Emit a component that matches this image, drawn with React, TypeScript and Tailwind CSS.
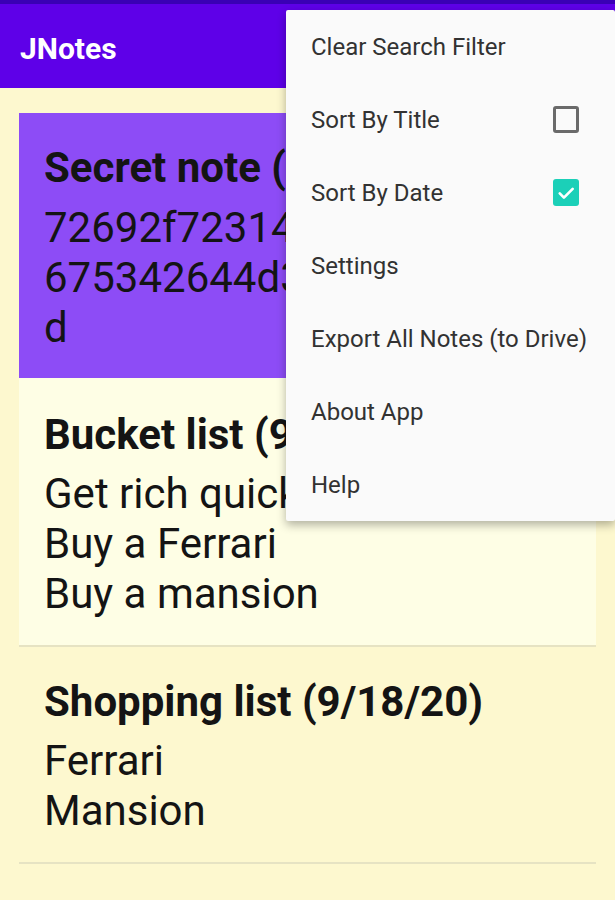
import React from "react";

const font = { fontFamily: "Roboto, 'Noto Sans', sans-serif" };

function Card({
  title,
  lines,
  className,
  pt,
  gap,
  pb,
}: {
  title: string;
  lines: string[];
  className: string;
  pt: string;
  gap: string;
  pb: string;
}) {
  return (
    <div className={`${className} ${pt} ${pb} px-[25px] overflow-hidden`}>
      <div className="text-[42px] leading-[50px] font-bold text-[#141414] whitespace-nowrap">{title}</div>
      <div className={gap}>
        {lines.map((l, i) => (
          <div key={i} className="text-[42px] leading-[50px] text-[#141414] whitespace-nowrap">
            {l}
          </div>
        ))}
      </div>
    </div>
  );
}

function MenuItem({ label, check }: { label: string; check?: "on" | "off" }) {
  return (
    <div className="h-[73px] flex items-center pl-[25px] pr-[36px] justify-between">
      <span className="text-[24px] text-[#323232] whitespace-nowrap">{label}</span>
      {check === "off" && (
        <span className="w-[26px] h-[27px] rounded-[3px] border-[3px] border-[#6a6a6a] box-border" />
      )}
      {check === "on" && (
        <span className="w-[26px] h-[27px] rounded-[3px] bg-[#1bd0b8] flex items-center justify-center">
          <svg width="20" height="20" viewBox="0 0 24 24" fill="none">
            <path d="M4.5 12.5l5 5L20 7" stroke="white" strokeWidth="3.2" strokeLinecap="round" strokeLinejoin="round" />
          </svg>
        </span>
      )}
    </div>
  );
}

export default function App() {
  return (
    <div className="w-[615px] h-[900px] relative overflow-hidden bg-[#fdf8cf]" style={font}>
      <div className="h-[4px] bg-[#3a00b5]" />
      <div className="h-[84px] bg-[#5e00e8] flex items-center px-[20px] pt-[4px]">
        <span className="text-white text-[30px] font-bold">JNotes</span>
      </div>
      <div className="px-[19px] pt-[25px] flex flex-col">
        <Card
          className="bg-[#8d4cf6]"
          pt="pt-[30px]"
          gap="mt-[10px]"
          pb="pb-[25px]"
          title="Secret note (9/18/20)"
          lines={["72692f72314f76655f4a", "675342644d3a6e4f5c2e", "d"]}
        />
        <Card
          className="bg-[#fefee5] border-b-2 border-[#e6e3c3]"
          pt="pt-[32px]"
          gap="mt-[9px]"
          pb="pb-[26px]"
          title="Bucket list (9/17/20)"
          lines={["Get rich quick", "Buy a Ferrari", "Buy a mansion"]}
        />
        <Card
          className="border-b-2 border-[#e6e3c3]"
          pt="pt-[30px]"
          gap="mt-[9px]"
          pb="pb-[26px]"
          title="Shopping list (9/18/20)"
          lines={["Ferrari", "Mansion"]}
        />
      </div>

      <div className="absolute top-[10px] left-[286px] w-[329px] bg-[#fafafa] rounded-[2px] shadow-[0_4px_10px_rgba(0,0,0,0.3)] flex flex-col">
        <MenuItem label="Clear Search Filter" />
        <MenuItem label="Sort By Title" check="off" />
        <MenuItem label="Sort By Date" check="on" />
        <MenuItem label="Settings" />
        <MenuItem label="Export All Notes (to Drive)" />
        <MenuItem label="About App" />
        <MenuItem label="Help" />
      </div>
    </div>
  );
}
